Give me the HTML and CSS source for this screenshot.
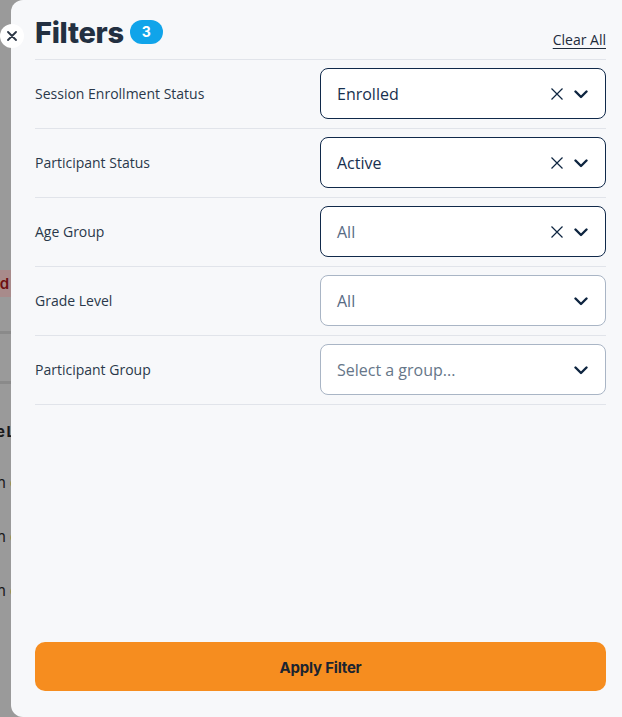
FILE: index.html
```html
<!DOCTYPE html>
<html lang="en">
<head>
<meta charset="utf-8">
<title>Filters</title>
<link rel="stylesheet" href="styles.css">
</head>
<body>
<div class="screen">
  <!-- page behind the drawer, dimmed by the backdrop -->
  <div class="backdrop">
    <div class="bg-chip"><span class="bg-red">ed</span></div>
    <div class="bg-rule r1"></div>
    <div class="bg-rule r2"></div>
    <div class="bg-head">e L</div>
    <div class="bg-line">h <span class="bg-org">e</span></div>
    <div class="bg-line">h <span class="bg-org">e</span></div>
    <div class="bg-line">h <span class="bg-org">e</span></div>
  </div>

  <aside class="drawer">
    <button class="close" aria-label="Close">
      <svg width="10" height="10" viewBox="0 0 10 10"><path d="M1 1L9 9M9 1L1 9" stroke="#2b3645" stroke-width="1.8" stroke-linecap="round"/></svg>
    </button>

    <header class="drawer-head">
      <h1 class="title">Filters <span class="badge">3</span></h1>
      <a class="clear" href="#">Clear All</a>
    </header>

    <div class="rows">
      <div class="row">
        <span class="label">Session Enrollment Status</span>
        <div class="select active">
          <span class="value">Enrolled</span>
          <span class="icons">
            <svg class="x" width="12" height="12" viewBox="0 0 12 12"><path d="M0.5 0.5L11.5 11.5M11.5 0.5L0.5 11.5" stroke="#0e2540" stroke-width="1.2"/></svg>
            <svg class="chev" width="14" height="9" viewBox="0 0 14 9"><path d="M1.5 1.5L7 7L12.5 1.5" fill="none" stroke="#0e2540" stroke-width="2.4" stroke-linecap="round" stroke-linejoin="round"/></svg>
          </span>
        </div>
      </div>
      <div class="row">
        <span class="label">Participant Status</span>
        <div class="select active">
          <span class="value">Active</span>
          <span class="icons">
            <svg class="x" width="12" height="12" viewBox="0 0 12 12"><path d="M0.5 0.5L11.5 11.5M11.5 0.5L0.5 11.5" stroke="#0e2540" stroke-width="1.2"/></svg>
            <svg class="chev" width="14" height="9" viewBox="0 0 14 9"><path d="M1.5 1.5L7 7L12.5 1.5" fill="none" stroke="#0e2540" stroke-width="2.4" stroke-linecap="round" stroke-linejoin="round"/></svg>
          </span>
        </div>
      </div>
      <div class="row">
        <span class="label">Age Group</span>
        <div class="select active">
          <span class="value muted">All</span>
          <span class="icons">
            <svg class="x" width="12" height="12" viewBox="0 0 12 12"><path d="M0.5 0.5L11.5 11.5M11.5 0.5L0.5 11.5" stroke="#0e2540" stroke-width="1.2"/></svg>
            <svg class="chev" width="14" height="9" viewBox="0 0 14 9"><path d="M1.5 1.5L7 7L12.5 1.5" fill="none" stroke="#0e2540" stroke-width="2.4" stroke-linecap="round" stroke-linejoin="round"/></svg>
          </span>
        </div>
      </div>
      <div class="row">
        <span class="label">Grade Level</span>
        <div class="select">
          <span class="value muted">All</span>
          <span class="icons">
            <svg class="chev" width="14" height="9" viewBox="0 0 14 9"><path d="M1.5 1.5L7 7L12.5 1.5" fill="none" stroke="#0e2540" stroke-width="2.4" stroke-linecap="round" stroke-linejoin="round"/></svg>
          </span>
        </div>
      </div>
      <div class="row">
        <span class="label">Participant Group</span>
        <div class="select">
          <span class="value placeholder">Select a group...</span>
          <span class="icons">
            <svg class="chev" width="14" height="9" viewBox="0 0 14 9"><path d="M1.5 1.5L7 7L12.5 1.5" fill="none" stroke="#0e2540" stroke-width="2.4" stroke-linecap="round" stroke-linejoin="round"/></svg>
          </span>
        </div>
      </div>
    </div>

    <div class="spacer"></div>

    <button class="apply">Apply Filter</button>
  </aside>
</div>
</body>
</html>
```

FILE: styles.css
```css
* { box-sizing: border-box; }

html, body {
  margin: 0;
  padding: 0;
  width: 622px;
  height: 717px;
  overflow: hidden;
}

.screen {
  position: relative;
  width: 622px;
  height: 717px;
  display: flex;
  background: #9a9a9a;
  font-family: "Open Sans", "Liberation Sans", sans-serif;
}

/* dimmed page strip */
.backdrop {
  width: 11px;
  flex: none;
  overflow: hidden;
  background: #9a9a9a;
  padding-top: 270px;
  font-family: "Inter", sans-serif;
  font-size: 15px;
  color: #1a1a1a;
  white-space: nowrap;
}
.bg-chip {
  height: 27px;
  background: #a88b8b;
  margin-left: -30px;
  padding-left: 21px;
  line-height: 27px;
  font-weight: 600;
}
.bg-red { color: #6e1010; }
.bg-rule { height: 3px; background: #8a8a8a; }
.r1 { margin-top: 34px; }
.r2 { margin-top: 47px; }
.bg-head {
  margin-top: 38px;
  margin-left: -4px;
  font-weight: 700;
  font-size: 15px;
  letter-spacing: -1px;
}
.bg-line {
  margin-top: 32px;
  margin-left: -3px;
  font-size: 15px;
  height: 22px;
}
.bg-org { color: #b0802a; }

/* drawer */
.drawer {
  position: relative;
  flex: 1;
  background: #f7f8fa;
  border-radius: 12px 0 0 12px;
  padding: 0 16px 26px 24px;
  display: flex;
  flex-direction: column;
}

.close {
  position: absolute;
  left: -11px;
  top: 24px;
  width: 24px;
  height: 24px;
  border-radius: 50%;
  background: #fff;
  border: 0;
  padding: 0;
  display: flex;
  align-items: center;
  justify-content: center;
}

.drawer-head {
  height: 60px;
  display: flex;
  align-items: flex-end;
  justify-content: space-between;
  border-bottom: 1px solid #e1e4ea;
  padding-bottom: 11px;
}

.title {
  margin: 0 0 1px;
  display: flex;
  align-items: center;
  gap: 6px;
  font-family: "Inter", sans-serif;
  font-weight: 800;
  font-size: 29px;
  letter-spacing: -0.3px;
  color: #233041;
  line-height: 1;
}

.badge {
  display: inline-flex;
  align-items: center;
  justify-content: center;
  width: 33px;
  height: 24px;
  border-radius: 12px;
  background: #10a4ea;
  color: #fff;
  font-size: 14px;
  font-weight: 700;
  letter-spacing: 0;
  margin-top: -2px;
}

.clear {
  font-size: 14px;
  color: #1d2b3c;
  text-decoration: underline;
  text-underline-offset: 3px;
  margin-bottom: -1px;
}

.row {
  height: 69px;
  display: flex;
  align-items: center;
  justify-content: space-between;
  border-bottom: 1px solid #e1e4ea;
}

.label {
  font-size: 14px;
  color: #2a384a;
  margin-top: -1px;
}

.select {
  width: 286px;
  height: 51px;
  border: 1px solid #a9b5c5;
  border-radius: 8px;
  background: #fff;
  display: flex;
  align-items: center;
  justify-content: space-between;
  padding: 0 17px 0 16px;
  margin-top: -1px;
}
.select.active { border-color: #10294a; }

.value {
  font-size: 16px;
  color: #17304f;
}
.value.muted { color: #586b84; }
.value.placeholder { color: #667689; }

.icons {
  display: flex;
  align-items: center;
  gap: 11px;
}
.chev { margin-top: 1px; }

.spacer { flex: 1; }

.apply {
  height: 49px;
  border: 0;
  border-radius: 10px;
  background: #f68d1f;
  color: #1b2430;
  font-family: "Inter", sans-serif;
  font-weight: 700;
  font-size: 15px;
  letter-spacing: -0.2px;
  padding-top: 2px;
}
```
